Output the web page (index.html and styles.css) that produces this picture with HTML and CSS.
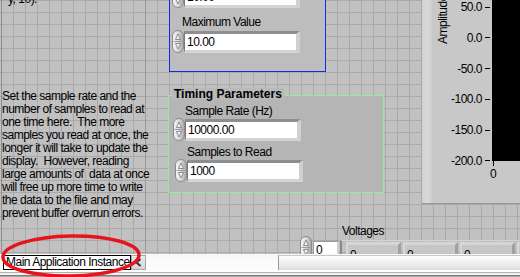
FILE: index.html
```html
<!DOCTYPE html>
<html lang="en">
<head>
    <meta charset="UTF-8">
    <meta name="viewport" content="width=device-width, initial-scale=1.0">
    <title>Acquire and Log - Front Panel</title>
    <link rel="stylesheet" href="styles.css">
</head>
<body>
    <svg class="defs" width="0" height="0" aria-hidden="true">
        <defs>
            <linearGradient id="spinFill" x1="0" y1="0" x2="1" y2="0">
                <stop offset="0" stop-color="#f6f6f6"/>
                <stop offset="0.45" stop-color="#dedede"/>
                <stop offset="1" stop-color="#a4a4a4"/>
            </linearGradient>
            <symbol id="spin" viewBox="0 0 12 23">
                <rect x="0.5" y="0.5" width="11" height="22" rx="5.5" fill="url(#spinFill)" stroke="#8a8a8a"/>
                <path d="M3.5 9.5 L6 4 L8.5 9.5 Z" fill="#f2f2f2" stroke="#777" stroke-width="0.8"/>
                <path d="M1.5 11.5 H10.5" stroke="#9c9c9c"/>
                <path d="M3.5 13.5 L6 19 L8.5 13.5 Z" fill="#f2f2f2" stroke="#777" stroke-width="0.8"/>
            </symbol>
        </defs>
    </svg>

    <main class="panel">
        <div class="vline vline-left"></div>
        <div class="vline vline-mid"></div>

        <p class="note note-top">y, 10).</p>

        <!-- range cluster, top part scrolled out of view -->
        <section class="range">
            <div class="numeric">
                <svg class="spin"><use href="#spin"/></svg>
                <div class="num-frame"><span class="num-field">10.00</span></div>
            </div>
            <div class="ctl-label">Maximum Value</div>
            <div class="numeric">
                <svg class="spin"><use href="#spin"/></svg>
                <div class="num-frame"><span class="num-field">10.00</span></div>
            </div>
        </section>

        <p class="note note-timing">Set the sample rate and the
number of samples to read at
one time here.  The more
samples you read at once, the
longer it will take to update the
display.  However, reading
large amounts of  data at once
will free up more time to write
the data to the file and may
prevent buffer overrun errors.</p>

        <section class="timing">
            <h2 class="timing-title">Timing Parameters</h2>
            <div class="ctl">
                <div class="ctl-label">Sample Rate (Hz)</div>
                <div class="numeric">
                    <svg class="spin"><use href="#spin"/></svg>
                    <div class="num-frame"><span class="num-field">10000.00</span></div>
                </div>
            </div>
            <div class="ctl ctl-second">
                <div class="ctl-label">Samples to Read</div>
                <div class="numeric">
                    <svg class="spin"><use href="#spin"/></svg>
                    <div class="num-frame"><span class="num-field">1000</span></div>
                </div>
            </div>
        </section>

        <section class="graph">
            <div class="graph-bevel"></div>
            <div class="graph-body">
                <div class="amp-label">Amplitude</div>
                <div class="y-scale">
                    <div class="y-tick">50.0<i></i></div>
                    <div class="y-tick">0.0<i></i></div>
                    <div class="y-tick">-50.0<i></i></div>
                    <div class="y-tick">-100.0<i></i></div>
                    <div class="y-tick">-150.0<i></i></div>
                    <div class="y-tick">-200.0<i></i></div>
                </div>
                <div class="plot"></div>
                <div class="x-tick"><i></i>0</div>
            </div>
        </section>

        <section class="voltages">
            <div class="arr-label">Voltages</div>
            <div class="arr-row">
                <div class="arr-index">
                    <svg class="spin"><use href="#spin"/></svg>
                    <div class="idx-frame"><span class="num-field">0</span></div>
                </div>
                <div class="arr-items">
                    <div class="arr-el"><span>0</span></div>
                    <div class="arr-el"><span>0</span></div>
                    <div class="arr-el"><span>0</span></div>
                    <div class="arr-el"><span>0</span></div>
                </div>
            </div>
        </section>
    </main>

    <footer class="statusbar">
        <span class="ctx-name">Main Application Instance</span>
        <span class="ctx-btn">
            <svg width="13" height="13" viewBox="0 0 13 13"><path d="M8.5 3 L4.5 6.5 L8.5 10" fill="none" stroke="#333" stroke-width="2"/></svg>
        </span>
        <span class="hscroll"></span>
    </footer>
    <div class="win-edge"></div>

    <svg class="mark" width="160" height="50" viewBox="0 0 160 50">
        <ellipse cx="71" cy="27" rx="68" ry="20" fill="none" stroke="#e8141c" stroke-width="3.5" transform="rotate(-1 71 27)"/>
    </svg>
</body>
</html>
```

FILE: styles.css
```css
body {
    margin: 0;
    width: 520px;
    height: 277px;
    overflow: hidden;
    position: relative;
    display: flex;
    flex-direction: column;
    font-family: "Liberation Sans", Arial, sans-serif;
    font-size: 12px;
    letter-spacing: -0.5px;
    color: #000;
    background: #c0c0c0;
}
.defs {
    position: absolute;
}

/* front panel canvas with the editing grid */
.panel {
    position: relative;
    flex: none;
    height: 254px;
    overflow: hidden;
    background-color: #c1c1c1;
    background-image:
        linear-gradient(to right, #a9a9a9 1px, transparent 1px),
        linear-gradient(to bottom, #a9a9a9 1px, transparent 1px);
    background-size: 12px 12px;
    background-position: 1px 0;
}
.vline {
    position: absolute;
    top: 0;
    bottom: 0;
    width: 1px;
    background: #8e8e8e;
}
.vline-left { left: 1px; }
.vline-mid { left: 145px; background: #9a9a9a; }

.note {
    position: absolute;
    margin: 0;
    line-height: 13px;
    white-space: pre;
}
.note-top {
    left: 8px;
    top: -7px;
}
.note-timing {
    left: 2px;
    top: 90px;
}

/* numeric controls */
.numeric {
    display: flex;
    align-items: center;
}
.spin {
    width: 12px;
    height: 23px;
    flex: none;
}
.num-frame {
    display: flex;
    width: 116px;
    box-sizing: border-box;
    border-style: solid;
    border-width: 3px 4px 3px 1px;
    border-color: #8e8e8e #d0d0d0 #d4d4d4 #7a7a7a;
}
.num-field {
    flex: 1;
    height: 16px;
    line-height: 16px;
    padding-left: 2px;
    background: #fff;
    white-space: nowrap;
}
.ctl-label {
    line-height: 15px;
    margin-left: 10px;
    white-space: nowrap;
}

.range {
    position: absolute;
    left: 169px;
    top: -20px;
    width: 157px;
    height: 92px;
    box-sizing: border-box;
    border: 1px solid #0b2fe6;
    background: #bdbdbd;
    padding: 4px 0 0 2px;
}
.range .ctl-label {
    margin-top: 7px;
}

.timing {
    position: absolute;
    left: 168px;
    top: 95px;
    width: 216px;
    height: 98px;
    box-sizing: border-box;
    border: 1px solid #8ef08e;
    background: #b5b5b5;
    padding: 8px 0 0 4px;
}
.timing-title {
    position: absolute;
    left: 3px;
    top: -8px;
    margin: 0;
    padding: 0 2px;
    font-size: 12px;
    font-weight: bold;
    letter-spacing: 0;
    line-height: 12px;
    background: #b9b9b9;
}
.ctl .ctl-label {
    margin-left: 12px;
    line-height: 14px;
}
.ctl-second {
    margin: 4px 0 0 2px;
}

/* waveform chart */
.graph {
    position: absolute;
    left: 422px;
    top: 0;
    right: 0;
    height: 203px;
    display: flex;
    border-bottom: 1px solid #969696;
}
.graph-bevel {
    width: 11px;
    flex: none;
    background: linear-gradient(to right, #d0d0d0, #dadada 40%, #d2d2d2 80%, #c6c6c6);
}
.graph-body {
    position: relative;
    flex: 1;
    background: #c8c8c8;
}
.amp-label {
    position: absolute;
    left: 4px;
    top: 44px;
    line-height: 12px;
    white-space: nowrap;
    transform-origin: 0 0;
    transform: rotate(-90deg);
}
.y-scale {
    position: absolute;
    left: 0;
    top: 1px;
    width: 57px;
    height: 166px;
    display: flex;
    flex-direction: column;
    justify-content: space-between;
}
.y-tick {
    display: flex;
    justify-content: flex-end;
    align-items: center;
    height: 12px;
    line-height: 12px;
}
.y-tick i {
    width: 5px;
    height: 1px;
    margin-left: 3px;
    background: #000;
}
.plot {
    position: absolute;
    left: 59px;
    right: 0;
    top: 0;
    height: 161px;
    background: #000;
}
.x-tick {
    position: absolute;
    left: 56px;
    top: 161px;
    width: 8px;
    display: flex;
    flex-direction: column;
    align-items: center;
    line-height: 12px;
}
.x-tick i {
    width: 1px;
    height: 5px;
    margin-bottom: 2px;
    background: #000;
}

/* array indicator */
.voltages {
    position: absolute;
    left: 300px;
    top: 225px;
}
.arr-label {
    margin-left: 42px;
    line-height: 12px;
}
.arr-row {
    display: flex;
    align-items: flex-start;
    margin-top: -1px;
}
.arr-index {
    display: flex;
    align-items: flex-start;
}
.idx-frame {
    display: flex;
    width: 26px;
    margin: 5px 0 0 1px;
    box-sizing: border-box;
    border-style: solid;
    border-width: 1px 2px 1px 1px;
    border-color: #9a9a9a #d0d0d0 #d0d0d0 #9a9a9a;
}
.arr-items {
    display: flex;
    gap: 2px;
    margin: 4px 0 0 1px;
    padding: 1px 0 0 4px;
    border-left: 2px solid #8a8a8a;
    border-top: 1px solid #d4d4d4;
}
.arr-el {
    flex: none;
    width: 55px;
    height: 22px;
    box-sizing: border-box;
    border-style: solid;
    border-width: 3px 3px 3px 2px;
    border-color: #d6d6d6 #a0a0a0 #a0a0a0 #d8d8d8;
    background: #c6c6c6;
}
.arr-el span {
    display: block;
    padding: 3px 0 0 2px;
    line-height: 14px;
}

/* context status bar */
.statusbar {
    flex: none;
    height: 17px;
    display: flex;
    align-items: flex-start;
    padding-top: 1px;
    box-sizing: border-box;
    background: linear-gradient(#f7f7f7, #fdfdfd);
}
.ctx-name {
    width: 128px;
    height: 15px;
    margin-left: 3px;
    box-sizing: border-box;
    border: 1px solid #000;
    background: #fff;
    padding-left: 2px;
    line-height: 13px;
    white-space: nowrap;
    overflow: hidden;
}
.ctx-btn {
    width: 15px;
    height: 15px;
    box-sizing: border-box;
    border: 1px solid #a8a8a8;
    background: linear-gradient(#ececec, #d4d4d4);
    display: flex;
    align-items: center;
    justify-content: center;
}
.hscroll {
    margin-left: auto;
    width: 242px;
    height: 15px;
    box-sizing: border-box;
    border-left: 1px solid #9c9c9c;
    border-top: 1px solid #c8c8c8;
    background: linear-gradient(#fefefe, #ececec 60%, #dedede);
}
.win-edge {
    flex: none;
    height: 6px;
    background: linear-gradient(#ffffff 0 1px, #b0b0b0 1px 2px, #f2f2f2 2px 4px, #7c7c7c 4px 5px, #a6a6a6 5px);
}

/* red annotation drawn over the screenshot */
.mark {
    position: absolute;
    left: 0;
    top: 229px;
}
```
